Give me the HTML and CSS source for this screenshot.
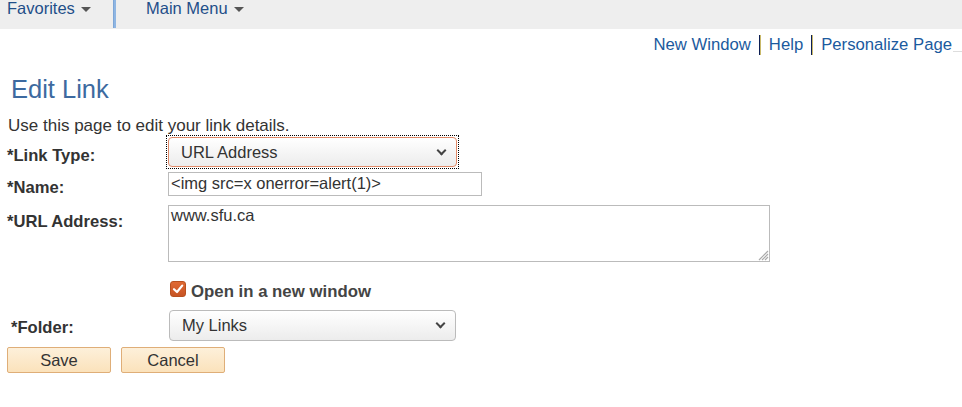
FILE: index.html
```html
<!DOCTYPE html>
<html>
<head>
<meta charset="utf-8">
<link rel="stylesheet" href="styles.css">
</head>
<body>
<div class="topbar">
  <div class="menu menu-fav">Favorites <span class="caret"></span></div>
  <div class="menu-sep"></div>
  <div class="menu menu-main">Main Menu <span class="caret"></span></div>
</div>
<div class="toplinks">
  <a class="tlink">New Window</a>
  <span class="tsep"></span>
  <a class="tlink">Help</a>
  <span class="tsep"></span>
  <a class="tlink">Personalize Page</a>
  <span class="tline"></span>
</div>
<h1 class="title">Edit Link</h1>
<p class="desc">Use this page to edit your link details.</p>
<div class="form">
  <div class="row row-type">
    <label class="lbl">*Link Type:</label>
    <div class="focus">
      <div class="select select-active">URL Address <span class="chev"></span></div>
    </div>
  </div>
  <div class="row row-name">
    <label class="lbl">*Name:</label>
    <div class="input">&lt;img src=x onerror=alert(1)&gt;</div>
  </div>
  <div class="row row-url">
    <label class="lbl">*URL Address:</label>
    <div class="textarea">www.sfu.ca
      <svg class="grip" width="12" height="12" viewBox="0 0 12 12"><path d="M11 2 L2 11 M11 5 L5 11 M11 8 L8 11" stroke="#aaa" stroke-width="1.2" fill="none"/></svg>
    </div>
  </div>
  <div class="row row-check">
    <span class="lbl"></span>
    <div class="check">
      <span class="cbox"><svg width="12" height="12" viewBox="0 0 12 12"><path d="M2 6.2 L5 9 L10.2 2.6" stroke="#fff" stroke-width="2.2" fill="none" stroke-linecap="round" stroke-linejoin="round"/></svg></span>
      <span class="ctext">Open in a new window</span>
    </div>
  </div>
  <div class="row row-folder">
    <label class="lbl lbl-folder">*Folder:</label>
    <div class="select select-folder">My Links <span class="chev"></span></div>
  </div>
</div>
<div class="buttons">
  <button class="btn btn-save">Save</button>
  <button class="btn btn-cancel">Cancel</button>
</div>
</body>
</html>
```

FILE: styles.css
```css
* { box-sizing: border-box; }
html, body { margin: 0; padding: 0; background: #fff; }
body {
  font-family: "Liberation Sans", Arial, sans-serif;
  font-size: 16.5px;
  color: #333;
  width: 962px;
  height: 407px;
  overflow: hidden;
}
.topbar {
  height: 29px;
  background: #eeeeee;
  display: flex;
  align-items: flex-start;
}
.menu {
  color: #1f4e89;
  font-size: 16.5px;
  line-height: 18px;
  margin-top: -1px;
  display: flex;
  align-items: center;
  gap: 6px;
}
.menu-fav { padding-left: 7px; width: 113px; }
.menu-sep {
  width: 3px;
  height: 28px;
  background: #8fb6e3;
  border-left: 1px solid #7ea6d6;
}
.menu-main { padding-left: 30px; }
.caret {
  display: inline-block;
  width: 0; height: 0;
  border-left: 5px solid transparent;
  border-right: 5px solid transparent;
  border-top: 5px solid #555;
  margin-top: 2px;
}
.toplinks {
  display: flex;
  justify-content: flex-end;
  align-items: center;
  height: 30px;
  margin-top: 1px;
  padding-right: 10px;
  position: relative;
}
.tlink {
  color: #1b5a9e;
  font-size: 16.7px;
  line-height: 20px;
}
.tsep {
  width: 2px;
  height: 20px;
  background: #0d1f55;
  border-right: 1px solid #c9b96a;
  margin: 0 8px 0 8px;
}
.tline {
  position: absolute;
  right: 0;
  top: 21px;
  width: 9px;
  height: 1px;
  background: #ddd;
}
.title {
  margin: 0;
  padding-left: 11px;
  margin-top: 14px;
  font-weight: normal;
  font-size: 25.5px;
  line-height: 30px;
  color: #3d6aa0;
}
.desc {
  margin: 13px 0 0 8px;
  font-size: 17px;
  line-height: 18px;
  color: #333;
}
.form { display: flex; flex-direction: column; }
.row { display: flex; align-items: flex-start; }
.lbl {
  width: 168px;
  padding-left: 7px;
  font-weight: bold;
  font-size: 16.6px;
  line-height: 16px;
  color: #333;
  flex: none;
}
.row-type .lbl { padding-top: 13px; }
.row-name .lbl { padding-top: 8px; }
.row-url .lbl { padding-top: 9px; }
.row-folder .lbl { padding-top: 10px; padding-left: 11px; }
.row-type { height: 34px; }
.focus {
  margin-left: -2px;
  padding: 1px;
  border: 1px dotted #000;
}
.select {
  position: relative;
  height: 30px;
  border-radius: 4px;
  background: linear-gradient(#ffffff, #ececec);
  font-size: 16.5px;
  line-height: 28px;
  color: #333;
  padding-left: 12px;
}
.select-active {
  width: 289px;
  border: 1px solid #e08a68;
}
.select-folder {
  width: 287px;
  height: 31px;
  border: 1px solid #bbb;
  margin-left: 1px;
}
.chev {
  position: absolute;
  right: 11px;
  top: 9px;
  width: 7px;
  height: 7px;
  border-right: 2px solid #444;
  border-bottom: 2px solid #444;
  transform: rotate(45deg);
}
.row-name { margin-top: 3px; }
.input {
  width: 314px;
  height: 24px;
  border: 1px solid #bbb;
  font-size: 16.5px;
  line-height: 21px;
  padding-left: 2px;
  color: #333;
}
.row-url { margin-top: 9px; }
.textarea {
  position: relative;
  width: 602px;
  height: 57px;
  border: 1px solid #bbb;
  font-size: 16.5px;
  line-height: 19px;
  padding: 0 2px;
  color: #333;
}
.grip { position: absolute; right: 0; bottom: 0; }
.row-check { margin-top: 19px; }
.check { display: flex; align-items: flex-start; margin-left: 2px; }
.cbox {
  width: 16px;
  height: 16px;
  border-radius: 3px;
  background: linear-gradient(#e06a34, #c75424);
  border: 1px solid #b8501f;
  display: flex;
  align-items: center;
  justify-content: center;
}
.ctext {
  margin-left: 5px;
  font-weight: bold;
  font-size: 16.8px;
  line-height: 16px;
  color: #444;
  margin-top: 3px;
}
.row-folder { margin-top: 10px; }
.buttons {
  display: flex;
  gap: 10px;
  padding-left: 7px;
  margin-top: 6px;
}
.btn {
  width: 104px;
  height: 26px;
  font-family: "Liberation Sans", Arial, sans-serif;
  font-size: 16.5px;
  color: #333;
  background: linear-gradient(#fdf0da, #fbe2bb);
  border: 1px solid #dfae78;
  border-radius: 2px;
  padding: 0;
}
```
